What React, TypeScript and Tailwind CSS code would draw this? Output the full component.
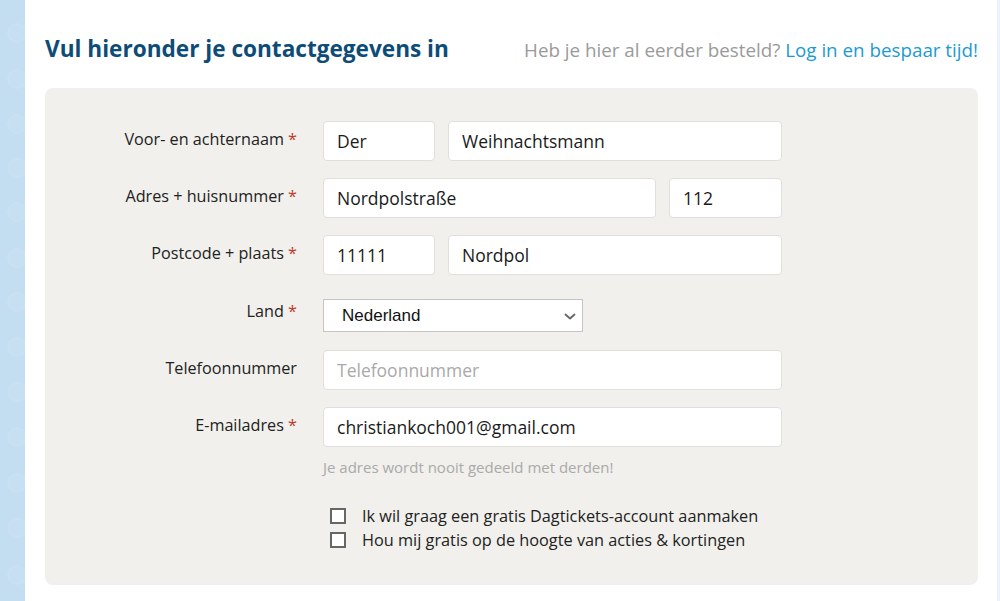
import React from "react";

const font = { fontFamily: '"Open Sans", "Noto Sans", sans-serif' };

function Label({ text, req, className }: { text: string; req?: boolean; className?: string }) {
  return (
    <div className={"text-right text-[16.2px] text-[#222] whitespace-nowrap " + (className ?? "mb-[3px]")}>
      {text}
      {req && <span className="text-[#c0392b]"> *</span>}
    </div>
  );
}

function Field({ value, placeholder, className }: { value?: string; placeholder?: string; className?: string }) {
  return (
    <input
      readOnly
      defaultValue={value}
      placeholder={placeholder}
      className={
        "h-[40px] rounded-[4px] border border-[#e0dfdb] bg-white pl-[13px] text-[17.5px] text-[#1a1a1a] placeholder:text-[#a9a9a9] outline-none " +
        (className ?? "")
      }
      style={font}
    />
  );
}

function Checkbox({ text }: { text: string }) {
  return (
    <label className="flex items-center h-[24px]">
      <span className="ml-[7px] w-[16px] h-[16px] border-[2px] border-[#666] bg-white" />
      <span className="ml-[16px] text-[16.3px] text-[#222]">{text}</span>
    </label>
  );
}

export default function App() {
  const circles = [33, 79, 124, 168, 212, 258, 302, 347, 392, 437, 483, 528, 575];
  return (
    <div className="w-[1000px] h-[601px] flex bg-white overflow-hidden" style={font}>
      <div className="w-[25px] h-full bg-[#c3ddf1] shrink-0">
        <svg width="25" height="601" viewBox="0 0 25 601">
          {circles.map((cy) => (
            <circle key={cy} cx="17" cy={cy} r="9" fill="#ffffff" fillOpacity="0.06" stroke="#ffffff" strokeOpacity="0.1" strokeWidth="2" />
          ))}
        </svg>
      </div>
      <div className="flex-1 pl-[20px] pr-[19px]">
        <div className="flex items-baseline justify-between pt-[34px] h-[88px]">
          <h1 className="text-[22.6px] font-bold text-[#0e4c78] leading-[30px]">Vul hieronder je contactgegevens in</h1>
          <p className="text-[18.8px] text-[#9a9a9a] leading-[30px]">
            Heb je hier al eerder besteld? <span className="text-[#1b9ad4]">Log in en bespaar tijd!</span>
          </p>
        </div>
        <div className="bg-[#f1f0ec] rounded-[8px] h-[497px] pt-[33px]">
          <div className="grid grid-cols-[252px_459px] gap-x-[26px] items-center">
            <Label text="Voor- en achternaam" req />
            <div className="flex gap-[13px]">
              <Field value="Der" className="w-[112px]" />
              <Field value="Weihnachtsmann" className="w-[334px]" />
            </div>
            <div className="h-[17px] col-span-2" />
            <Label text="Adres + huisnummer" req />
            <div className="flex gap-[13px]">
              <Field value="Nordpolstraße" className="w-[333px]" />
              <Field value="112" className="w-[113px]" />
            </div>
            <div className="h-[17px] col-span-2" />
            <Label text="Postcode + plaats" req />
            <div className="flex gap-[13px]">
              <Field value="11111" className="w-[112px]" />
              <Field value="Nordpol" className="w-[334px]" />
            </div>
            <div className="h-[24px] col-span-2" />
            <Label text="Land" req className="mb-[8px]" />
            <div className="relative w-[260px] h-[33px] border border-[#c4c4c4] bg-white flex items-center">
              <span className="pl-[18px] text-[17px] text-[#111]" style={{ fontFamily: '"Liberation Sans", Arial, sans-serif' }}>
                Nederland
              </span>
              <svg className="absolute right-[6px] top-[13px]" width="12" height="7" viewBox="0 0 12 7">
                <path d="M1.5 1.5 L6 5.5 L10.5 1.5" fill="none" stroke="#666" strokeWidth="1.8" strokeLinecap="round" strokeLinejoin="round" />
              </svg>
            </div>
            <div className="h-[18px] col-span-2" />
            <Label text="Telefoonnummer" />
            <Field placeholder="Telefoonnummer" className="w-[459px]" />
            <div className="h-[17px] col-span-2" />
            <Label text="E-mailadres" req />
            <Field value="christiankoch001@gmail.com" className="w-[459px]" />
            <div />
            <div className="text-[15px] text-[#aaaaaa] pt-[10px] leading-[20px]">Je adres wordt nooit gedeeld met derden!</div>
            <div />
            <div className="pt-[27px] flex flex-col">
              <Checkbox text="Ik wil graag een gratis Dagtickets-account aanmaken" />
              <Checkbox text="Hou mij gratis op de hoogte van acties & kortingen" />
            </div>
          </div>
        </div>
      </div>
      <div className="w-[3px] h-full bg-[#eaf3fb] shrink-0" />
    </div>
  );
}
